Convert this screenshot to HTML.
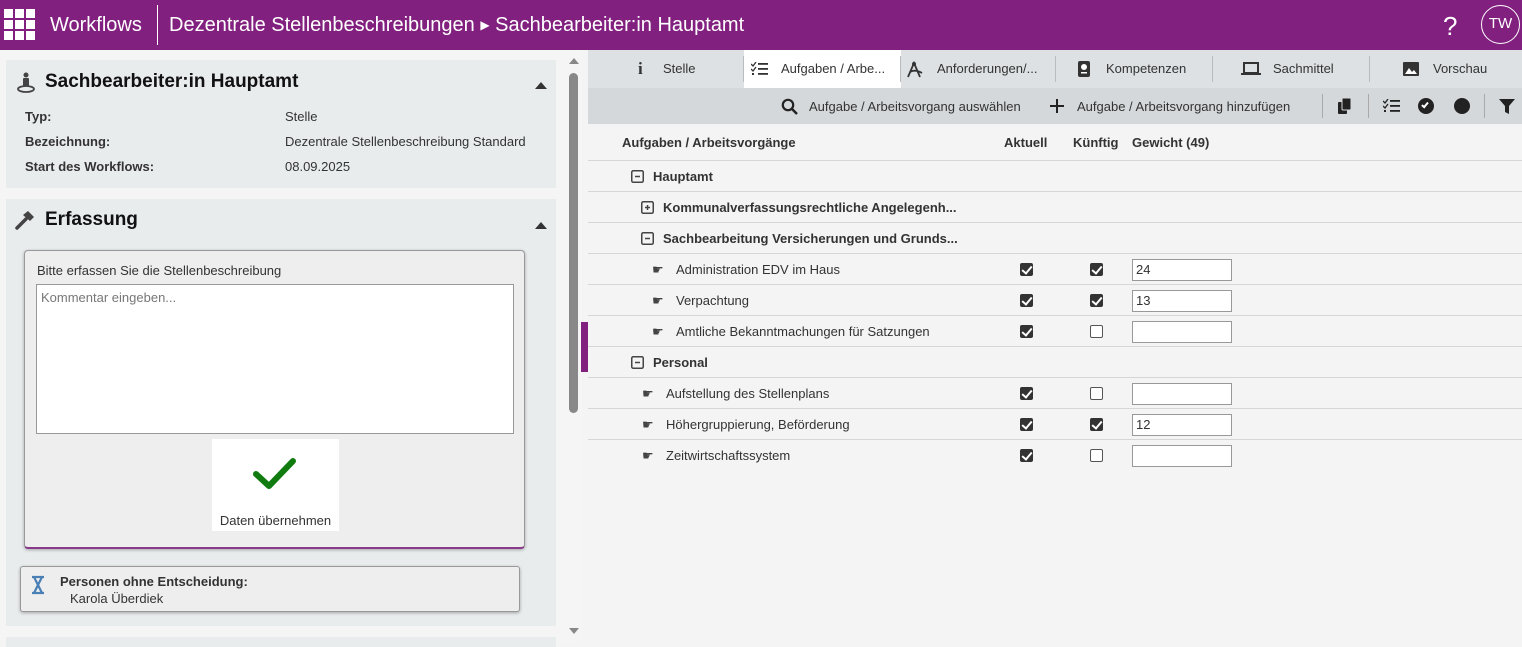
<!DOCTYPE html>
<html><head><meta charset="utf-8">
<style>
*{box-sizing:border-box;margin:0;padding:0}
body{width:1522px;height:642px;overflow:hidden;font-family:"Liberation Sans",sans-serif;font-size:13px;color:#333;background:#f4f4f4;position:relative}
.hdr{position:absolute;left:0;top:0;width:1522px;height:50px;background:#81207f;color:#fff}
.abs{position:absolute}
.left{position:absolute;left:0;top:50px;width:566px;height:592px;background:#f5f5f5}
.panel{position:absolute;left:6px;width:550px;background:#e9eced}
.lbl{position:absolute;font-weight:bold;font-size:13px;color:#333}
.val{position:absolute;font-size:13px;color:#333}
.right{position:absolute;left:588px;top:50px;width:934px;height:592px;background:#f4f4f4}
.tabs{position:absolute;left:0;top:0;width:934px;height:38px;background:#dde1e4}
.tab{position:absolute;top:0;height:38px;line-height:38px;font-size:13px;color:#333}
.sep{position:absolute;top:6px;width:1px;height:26px;background:#b8bcbf}
.tb{position:absolute;left:0;top:38px;width:934px;height:36px;background:#d4d8db}
.row{position:absolute;left:0;width:934px;height:31px;border-bottom:1px solid #d6d6d6;line-height:32px;font-size:13px}
.cb{position:absolute;top:9px;width:13px;height:13px;border:1px solid #555;border-radius:2px;background:#fff}
.cb.on{background:#333;border-color:#333}
.cb.on:after{content:"";position:absolute;left:3px;top:0px;width:4px;height:8px;border:solid #fff;border-width:0 2px 2px 0;transform:rotate(40deg)}
.inp{position:absolute;left:544px;top:5px;width:100px;height:22px;background:#fff;border:1px solid #999;line-height:20px;padding-left:3px;font-size:13px}
.box{position:absolute;top:9px;width:13px;height:13px}
.hand{position:absolute;top:0;font-size:13px;color:#444}
</style></head><body>
<div class="hdr">
 <svg class="abs" style="left:4px;top:9px" width="32" height="32" viewBox="0 0 32 32" fill="#fff">
  <rect x="0" y="0" width="9" height="9"/><rect x="11" y="0" width="9" height="9"/><rect x="22" y="0" width="9" height="9"/>
  <rect x="0" y="11" width="9" height="9"/><rect x="11" y="11" width="9" height="9"/><rect x="22" y="11" width="9" height="9"/>
  <rect x="0" y="22" width="9" height="9"/><rect x="11" y="22" width="9" height="9"/><rect x="22" y="22" width="9" height="9"/>
 </svg>
 <div class="abs" style="left:50px;top:14px;font-size:20px">Workflows</div>
 <div class="abs" style="left:157px;top:5px;width:1px;height:40px;background:#fff"></div>
 <div class="abs" style="left:169px;top:14px;font-size:20px">Dezentrale Stellenbeschreibungen <span style="font-size:12px;position:relative;top:-2px">&#9654;</span> Sachbearbeiter:in Hauptamt</div>
 <div class="abs" style="left:1443px;top:11px;font-size:26px">?</div>
 <div class="abs" style="left:1481px;top:5px;width:39px;height:39px;border:1.5px solid #fff;border-radius:50%;text-align:center;line-height:36px;font-size:15px">TW</div>
</div>

<div class="left">
 <div class="panel" style="top:10px;height:128px">
  <svg class="abs" style="left:10px;top:12px" width="20" height="22" viewBox="0 0 20 22"><circle cx="10" cy="3" r="2.5" fill="#444"/><rect x="7" y="6" width="6" height="8" rx="1" fill="#444"/><ellipse cx="10" cy="17" rx="8" ry="3" fill="none" stroke="#444" stroke-width="1.8"/></svg>
  <div class="abs" style="left:39px;top:11px;font-size:19px;font-weight:bold;color:#111">Sachbearbeiter:in Hauptamt</div>
  <div class="abs" style="left:529px;top:22px;width:0;height:0;border-left:6px solid transparent;border-right:6px solid transparent;border-bottom:7px solid #333"></div>
  <div class="lbl" style="left:19px;top:49px">Typ:</div><div class="val" style="left:279px;top:49px">Stelle</div>
  <div class="lbl" style="left:19px;top:74px">Bezeichnung:</div><div class="val" style="left:279px;top:74px">Dezentrale Stellenbeschreibung Standard</div>
  <div class="lbl" style="left:19px;top:99px">Start des Workflows:</div><div class="val" style="left:279px;top:99px">08.09.2025</div>
 </div>
 <div class="panel" style="top:149px;height:427px">
  <svg class="abs" style="left:9px;top:11px" width="20" height="20" viewBox="0 0 20 20"><path d="M2 18 L11 9" stroke="#444" stroke-width="3.5" stroke-linecap="round"/><path d="M8 5 L13 1 L19 7 L15 11 Z" fill="#444"/></svg>
  <div class="abs" style="left:39px;top:10px;font-size:19px;font-weight:bold;color:#111">Erfassung</div>
  <div class="abs" style="left:529px;top:23px;width:0;height:0;border-left:6px solid transparent;border-right:6px solid transparent;border-bottom:7px solid #333"></div>
  <div class="abs" style="left:18px;top:51px;width:501px;height:299px;background:#eee;border:1px solid #999;border-bottom:2px solid #8a3a8a;border-radius:4px;box-shadow:0 1px 3px rgba(0,0,0,.3)">
   <div class="abs" style="left:12px;top:12px;font-size:13px">Bitte erfassen Sie die Stellenbeschreibung</div>
   <div class="abs" style="left:11px;top:33px;width:478px;height:150px;background:#fff;border:1px solid #999;padding:5px 4px;color:#777;font-size:13px">Kommentar eingeben...</div>
   <div class="abs" style="left:187px;top:188px;width:127px;height:92px;background:#fff">
    <svg class="abs" style="left:40px;top:17px" width="46" height="36" viewBox="0 0 46 36"><path d="M4 18 L17 30 L41 5" fill="none" stroke="#107c10" stroke-width="6" stroke-linecap="round" stroke-linejoin="round"/></svg>
    <div class="abs" style="left:0;width:127px;top:74px;text-align:center;font-size:13px">Daten übernehmen</div>
   </div>
  </div>
  <div class="abs" style="left:14px;top:367px;width:500px;height:46px;background:#eee;border:1px solid #999;border-radius:3px;box-shadow:0 1px 3px rgba(0,0,0,.3)">
   <svg class="abs" style="left:9px;top:8px" width="16" height="20" viewBox="0 0 16 20"><path d="M2 2 H14 M2 18 H14 M4 2 L12 18 M12 2 L4 18" stroke="#4a7fb5" stroke-width="2.2" fill="none"/></svg>
   <div class="abs" style="left:39px;top:7px;font-weight:bold;font-size:13px">Personen ohne Entscheidung:</div>
   <div class="abs" style="left:49px;top:24px;font-size:13px">Karola Überdiek</div>
  </div>
 </div>
 <div class="panel" style="top:587px;height:10px"></div>
</div>
<div class="abs" style="left:566px;top:50px;width:16px;height:592px;background:#f5f5f5"></div>
<div class="abs" style="left:569px;top:58px;width:0;height:0;border-left:5px solid transparent;border-right:5px solid transparent;border-bottom:6px solid #888"></div>
<div class="abs" style="left:569px;top:73px;width:9px;height:340px;background:#888;border-radius:5px"></div>
<div class="abs" style="left:569px;top:628px;width:0;height:0;border-left:5px solid transparent;border-right:5px solid transparent;border-top:6px solid #888"></div>
<div class="abs" style="left:581px;top:322px;width:7px;height:50px;background:#81207f"></div>

<div class="right">
 <div class="tabs">
  <div class="abs" style="left:156px;top:0;width:157px;height:38px;background:#fff"></div>
  <div class="tab" style="left:50px;font-weight:bold;font-family:'Liberation Serif',serif;font-size:17px">i</div>
  <div class="tab" style="left:75px">Stelle</div>
  <div class="sep" style="left:155px"></div>
  <svg class="abs" style="left:163px;top:12px" width="17" height="14" viewBox="0 0 17 14"><path d="M0 2 L2 4 L5 0 M0 7 L2 9 L5 5" stroke="#333" stroke-width="1.3" fill="none"/><rect x="7" y="1" width="10" height="1.8" fill="#333"/><rect x="7" y="6" width="10" height="1.8" fill="#333"/><rect x="1" y="11" width="2" height="2" fill="#333"/><rect x="7" y="11" width="10" height="1.8" fill="#333"/></svg>
  <div class="tab" style="left:193px">Aufgaben / Arbe...</div>
  <div class="sep" style="left:312px"></div>
  <svg class="abs" style="left:318px;top:11px" width="18" height="17" viewBox="0 0 18 17"><path d="M2 16 L8 2 L14 16 M4 11 Q9 8 16 12" stroke="#333" stroke-width="1.8" fill="none"/><circle cx="8" cy="3" r="2" fill="#333"/></svg>
  <div class="tab" style="left:349px">Anforderungen/...</div>
  <div class="sep" style="left:467px"></div>
  <svg class="abs" style="left:489px;top:11px" width="14" height="16" viewBox="0 0 14 16"><rect x="1" y="0" width="12" height="16" rx="2" fill="#333"/><circle cx="7" cy="6" r="3" fill="#fff"/><rect x="4" y="11" width="6" height="1.5" fill="#fff"/></svg>
  <div class="tab" style="left:518px">Kompetenzen</div>
  <div class="sep" style="left:624px"></div>
  <svg class="abs" style="left:653px;top:12px" width="20" height="14" viewBox="0 0 20 14"><rect x="3" y="1" width="14" height="10" fill="none" stroke="#333" stroke-width="2"/><rect x="0" y="11" width="20" height="2" fill="#333"/></svg>
  <div class="tab" style="left:685px">Sachmittel</div>
  <div class="sep" style="left:781px"></div>
  <svg class="abs" style="left:815px;top:12px" width="16" height="14" viewBox="0 0 16 14"><rect x="0" y="0" width="16" height="14" rx="1" fill="#333"/><path d="M2 12 L6 6 L9 10 L11 8 L14 12 Z" fill="#fff"/></svg>
  <div class="tab" style="left:845px">Vorschau</div>
 </div>
 <div class="tb">
  <svg class="abs" style="left:193px;top:10px" width="17" height="17" viewBox="0 0 17 17"><circle cx="7" cy="7" r="5.2" fill="none" stroke="#222" stroke-width="2.2"/><path d="M11 11 L16 16" stroke="#222" stroke-width="2.5"/></svg>
  <div class="abs" style="left:221px;top:11px">Aufgabe / Arbeitsvorgang auswählen</div>
  <svg class="abs" style="left:462px;top:11px" width="14" height="14" viewBox="0 0 14 14"><path d="M7 0 V14 M0 7 H14" stroke="#222" stroke-width="2"/></svg>
  <div class="abs" style="left:489px;top:11px">Aufgabe / Arbeitsvorgang hinzufügen</div>
  <div class="abs" style="left:734px;top:6px;width:1px;height:24px;background:#aaa"></div>
  <svg class="abs" style="left:750px;top:10px" width="14" height="16" viewBox="0 0 14 16"><rect x="0" y="4" width="9" height="12" rx="1" fill="#222"/><rect x="4" y="0" width="9" height="12" rx="1" fill="#222" stroke="#d4d8db" stroke-width="1"/></svg>
  <div class="abs" style="left:780px;top:6px;width:1px;height:24px;background:#aaa"></div>
  <svg class="abs" style="left:795px;top:11px" width="17" height="14" viewBox="0 0 17 14"><path d="M0 2 L2 4 L5 0 M0 7 L2 9 L5 5" stroke="#222" stroke-width="1.3" fill="none"/><rect x="7" y="1" width="10" height="1.8" fill="#222"/><rect x="7" y="6" width="10" height="1.8" fill="#222"/><rect x="1" y="11" width="2" height="2" fill="#222"/><rect x="7" y="11" width="10" height="1.8" fill="#222"/></svg>
  <div class="abs" style="left:830px;top:10px;width:16px;height:16px;border-radius:50%;background:#222"><div style="position:absolute;left:5px;top:3px;width:4px;height:7px;border:solid #fff;border-width:0 2px 2px 0;transform:rotate(40deg)"></div></div>
  <div class="abs" style="left:866px;top:10px;width:16px;height:16px;border-radius:50%;background:#222"></div>
  <div class="abs" style="left:896px;top:6px;width:1px;height:24px;background:#aaa"></div>
  <svg class="abs" style="left:911px;top:11px" width="16" height="15" viewBox="0 0 16 15"><path d="M0 0 H16 L10 7 V15 L6 13 V7 Z" fill="#222"/></svg>
 </div>
 <div class="row" style="top:74px;height:37px;line-height:37px;font-weight:bold">
  <span class="abs" style="left:34px">Aufgaben / Arbeitsvorgänge</span>
  <span class="abs" style="left:416px">Aktuell</span>
  <span class="abs" style="left:485px">Künftig</span>
  <span class="abs" style="left:544px">Gewicht (49)</span>
 </div>
 <div class="row" style="top:111px"><svg class="box" style="left:43px" viewBox="0 0 13 13"><rect x="0.75" y="0.75" width="11.5" height="11.5" rx="1.5" fill="none" stroke="#444" stroke-width="1.5"/><path d="M4 6.5 H9" stroke="#444" stroke-width="1.5"/></svg><span class="abs" style="left:65px;font-weight:bold">Hauptamt</span></div>
 <div class="row" style="top:142px"><svg class="box" style="left:53px" viewBox="0 0 13 13"><rect x="0.75" y="0.75" width="11.5" height="11.5" rx="1.5" fill="none" stroke="#444" stroke-width="1.5"/><path d="M4 6.5 H9 M6.5 4 V9" stroke="#444" stroke-width="1.5"/></svg><span class="abs" style="left:75px;font-weight:bold">Kommunalverfassungsrechtliche Angelegenh...</span></div>
 <div class="row" style="top:173px"><svg class="box" style="left:53px" viewBox="0 0 13 13"><rect x="0.75" y="0.75" width="11.5" height="11.5" rx="1.5" fill="none" stroke="#444" stroke-width="1.5"/><path d="M4 6.5 H9" stroke="#444" stroke-width="1.5"/></svg><span class="abs" style="left:75px;font-weight:bold">Sachbearbeitung Versicherungen und Grunds...</span></div>
 <div class="row" style="top:204px"><span class="hand" style="left:64px">&#9755;</span><span class="abs" style="left:88px">Administration EDV im Haus</span><div class="cb on" style="left:432px"></div><div class="cb on" style="left:502px"></div><div class="inp">24</div></div>
 <div class="row" style="top:235px"><span class="hand" style="left:64px">&#9755;</span><span class="abs" style="left:88px">Verpachtung</span><div class="cb on" style="left:432px"></div><div class="cb on" style="left:502px"></div><div class="inp">13</div></div>
 <div class="row" style="top:266px"><span class="hand" style="left:64px">&#9755;</span><span class="abs" style="left:88px">Amtliche Bekanntmachungen für Satzungen</span><div class="cb on" style="left:432px"></div><div class="cb" style="left:502px"></div><div class="inp"></div></div>
 <div class="row" style="top:297px"><svg class="box" style="left:43px" viewBox="0 0 13 13"><rect x="0.75" y="0.75" width="11.5" height="11.5" rx="1.5" fill="none" stroke="#444" stroke-width="1.5"/><path d="M4 6.5 H9" stroke="#444" stroke-width="1.5"/></svg><span class="abs" style="left:65px;font-weight:bold">Personal</span></div>
 <div class="row" style="top:328px"><span class="hand" style="left:54px">&#9755;</span><span class="abs" style="left:78px">Aufstellung des Stellenplans</span><div class="cb on" style="left:432px"></div><div class="cb" style="left:502px"></div><div class="inp"></div></div>
 <div class="row" style="top:359px"><span class="hand" style="left:54px">&#9755;</span><span class="abs" style="left:78px">Höhergruppierung, Beförderung</span><div class="cb on" style="left:432px"></div><div class="cb on" style="left:502px"></div><div class="inp">12</div></div>
 <div class="row" style="top:390px;border-bottom:none"><span class="hand" style="left:54px">&#9755;</span><span class="abs" style="left:78px">Zeitwirtschaftssystem</span><div class="cb on" style="left:432px"></div><div class="cb" style="left:502px"></div><div class="inp"></div></div>
</div>
</body></html>
